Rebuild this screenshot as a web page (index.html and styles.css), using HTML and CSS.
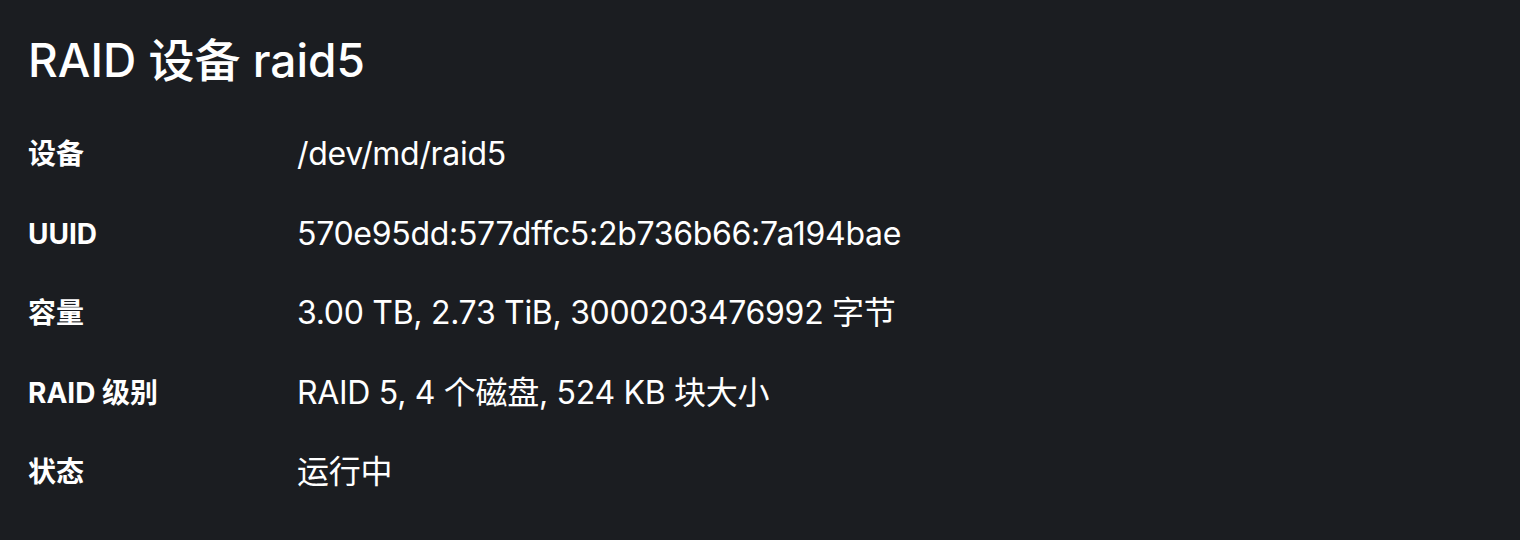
FILE: index.html
```html
<!DOCTYPE html>
<html lang="zh-CN">
<head>
<meta charset="utf-8">
<title>RAID 设备 raid5</title>
<link rel="stylesheet" href="styles.css">
</head>
<body>
<main class="page">
  <h1 class="title">RAID 设备 raid5</h1>
  <dl class="details">
    <div class="row"><dt class="term">设备</dt><dd class="value">/dev/md/raid5</dd></div>
    <div class="row"><dt class="term">UUID</dt><dd class="value">570e95dd:577dffc5:2b736b66:7a194bae</dd></div>
    <div class="row"><dt class="term">容量</dt><dd class="value">3.00 TB, 2.73 TiB, 3000203476992 字节</dd></div>
    <div class="row"><dt class="term">RAID 级别</dt><dd class="value">RAID 5, 4 个磁盘, 524 KB 块大小</dd></div>
    <div class="row"><dt class="term">状态</dt><dd class="value">运行中</dd></div>
  </dl>
</main>
</body>
</html>
```
FILE: styles.css
```css
html, body {
  margin: 0;
  padding: 0;
  background: #1b1d21;
  color: #ffffff;
  font-family: "Inter", "Noto Sans CJK SC", sans-serif;
}
.page {
  padding: 24px 28px 0;
}
.title {
  margin: 0;
  font-size: 46px;
  font-weight: 500;
  line-height: 72px;
}
.details {
  margin: 38px 0 0;
  display: flex;
  flex-direction: column;
  gap: 39.5px;
}
.row {
  display: grid;
  grid-template-columns: 269px 1fr;
  align-items: center;
  line-height: 40px;
}
.term {
  font-size: 28px;
  font-weight: 700;
  line-height: 40px;
}
.value {
  margin: 0;
  font-size: 32px;
  font-weight: 400;
  line-height: 40px;
  letter-spacing: -0.3px;
}
```
